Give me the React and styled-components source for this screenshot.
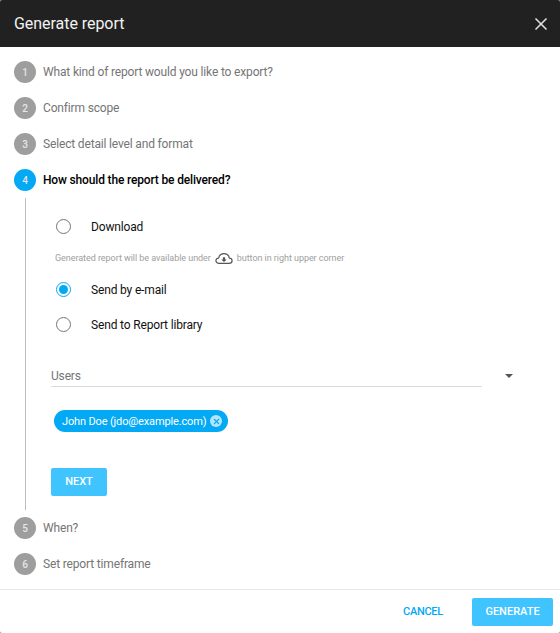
import React from 'react';
import styled, { createGlobalStyle } from 'styled-components';
import { X } from 'lucide-react';

const GlobalStyle = createGlobalStyle`
  html, body {
    margin: 0;
    padding: 0;
    background: #8c8c8c;
  }
`;

const Dialog = styled.div`
  display: flex;
  flex-direction: column;
  width: 560px;
  height: 633px;
  background: #fff;
  border-radius: 2px;
  overflow: hidden;
  font-family: Roboto, sans-serif;
`;

const Header = styled.div`
  display: flex;
  align-items: center;
  justify-content: space-between;
  flex: 0 0 47px;
  padding: 0 9px 0 14px;
  background: #212121;
  color: #f2f2f2;
`;

const Title = styled.h1`
  margin: 0;
  font-size: 16px;
  font-weight: 400;
  letter-spacing: -0.05px;
`;

const CloseButton = styled.span`
  display: flex;
  color: #e0e0e0;
`;

const Steps = styled.div`
  flex: 1;
  padding-top: 7px;
`;

const Step = styled.div`
  display: flex;
  align-items: center;
  gap: 7px;
  height: 36px;
  padding-left: 14px;
`;

const StepNumber = styled.span`
  display: flex;
  align-items: center;
  justify-content: center;
  width: 22px;
  height: 22px;
  border-radius: 50%;
  background: ${({ $active }) => ($active ? '#03a9f4' : '#9e9e9e')};
  color: #e6e6e6;
  font-size: 10px;
  font-weight: 500;
`;

const StepLabel = styled.span`
  font-size: 12px;
  letter-spacing: -0.16px;
  font-weight: ${({ $active }) => ($active ? 500 : 400)};
  color: ${({ $active }) => ($active ? '#000' : '#757575')};
`;

const StepContent = styled.div`
  display: flex;
  flex-direction: column;
  height: 312px;
  box-sizing: border-box;
  margin-left: 25px;
  padding-top: 17px;
  border-left: 1px solid #bdbdbd;
`;

const RadioRow = styled.label`
  display: flex;
  align-items: center;
  gap: 20px;
  height: 22px;
  margin: ${({ $mt }) => $mt || 0}px 0 0 30px;
  font-size: 12px;
  letter-spacing: -0.16px;
  color: #111;
`;

const RadioText = styled.span`
  margin-top: 2px;
`;

const RadioCircle = styled.span`
  display: flex;
  align-items: center;
  justify-content: center;
  box-sizing: border-box;
  width: 15px;
  height: 15px;
  border-radius: 50%;
  border: 1px solid ${({ $checked }) => ($checked ? '#03a9f4' : '#757575')};
  &::after {
    content: '';
    display: ${({ $checked }) => ($checked ? 'block' : 'none')};
    width: 9px;
    height: 9px;
    border-radius: 50%;
    background: #03a9f4;
  }
`;

const Note = styled.div`
  display: flex;
  align-items: center;
  gap: 4px;
  height: 20px;
  margin: 11px 0 0 29px;
  font-size: 9px;
  letter-spacing: -0.05px;
  color: #9e9e9e;
`;

const SelectField = styled.div`
  display: flex;
  align-items: center;
  height: 16px;
  width: 431px;
  margin: 33px 0 0 25px;
  padding-bottom: 2px;
  border-bottom: 1px solid #dcdcdc;
  font-size: 12px;
  letter-spacing: -0.16px;
  color: #757575;
  position: relative;
`;

const SelectArrow = styled.span`
  position: absolute;
  left: 454px;
  top: 6px;
  width: 0;
  height: 0;
  border-left: 4px solid transparent;
  border-right: 4px solid transparent;
  border-top: 4px solid #555;
`;

const Chip = styled.div`
  display: flex;
  align-items: center;
  align-self: flex-start;
  gap: 4px;
  height: 22px;
  margin: 23px 0 0 28px;
  padding: 0 6px 0 8px;
  border-radius: 11px;
  background: #03a9f4;
  color: #fff;
  font-size: 11px;
  letter-spacing: -0.14px;
`;

const ChipRemove = styled.span`
  display: flex;
  align-items: center;
  justify-content: center;
  width: 12px;
  height: 12px;
  border-radius: 50%;
  background: #b3e5fc;
  color: #03a9f4;
`;

const Button = styled.button`
  height: 28px;
  width: ${({ $width }) => $width}px;
  padding: 0;
  border: 0;
  border-radius: 2px;
  background: #40c4ff;
  color: #fff;
  font-family: Roboto, sans-serif;
  font-size: 11px;
  font-weight: 500;
`;

const NextButton = styled(Button)`
  align-self: flex-start;
  margin: 36px 0 0 25px;
  padding-bottom: 2px;
`;

const Footer = styled.div`
  display: flex;
  align-items: center;
  justify-content: flex-end;
  flex: 0 0 44px;
  box-sizing: border-box;
  padding: 0 7px 0 0;
  border-top: 1px solid #e8e8e8;
`;

const CancelButton = styled(Button)`
  margin-right: 13px;
  background: transparent;
  color: #03a9f4;
  letter-spacing: -0.3px;
`;

const CloudDownload = () => (
  <svg width="18" height="13" viewBox="0 0 20 14" fill="none">
    <path
      d="M5 12.5H4.5C2.5 12.5 1 11.2 1 9.5C1 7.8 2.3 6.6 4 6.5C4.7 3.5 7 1.5 10 1.5C13 1.5 15.3 3.5 16 6.5C17.7 6.6 19 7.8 19 9.5C19 11.2 17.5 12.5 15.5 12.5H5Z"
      stroke="#555"
      strokeWidth="1.3"
    />
    <path d="M8.8 5.5H11.2V8H13L10 11L7 8H8.8V5.5Z" fill="#555" />
  </svg>
);

const topSteps = ['What kind of report would you like to export?', 'Confirm scope', 'Select detail level and format'];
const bottomSteps = [
  { n: 5, label: 'When?' },
  { n: 6, label: 'Set report timeframe' },
];

const App = () => {
  return (
    <Dialog>
      <GlobalStyle />
      <Header>
        <Title>Generate report</Title>
        <CloseButton>
          <X size={20} strokeWidth={2} />
        </CloseButton>
      </Header>
      <Steps>
        {topSteps.map((label, i) => (
          <Step key={label}>
            <StepNumber>{i + 1}</StepNumber>
            <StepLabel>{label}</StepLabel>
          </Step>
        ))}
        <Step>
          <StepNumber $active>4</StepNumber>
          <StepLabel $active>How should the report be delivered?</StepLabel>
        </Step>
        <StepContent>
          <RadioRow>
            <RadioCircle />
            <RadioText>Download</RadioText>
          </RadioRow>
          <Note>
            Generated report will be available under
            <CloudDownload />
            button in right upper corner
          </Note>
          <RadioRow $mt={10}>
            <RadioCircle $checked />
            <RadioText>Send by e-mail</RadioText>
          </RadioRow>
          <RadioRow $mt={13}>
            <RadioCircle />
            <RadioText>Send to Report library</RadioText>
          </RadioRow>
          <SelectField>
            Users
            <SelectArrow />
          </SelectField>
          <Chip>
            John Doe (jdo@example.com)
            <ChipRemove>
              <X size={9} strokeWidth={3} />
            </ChipRemove>
          </Chip>
          <NextButton $width={56}>NEXT</NextButton>
        </StepContent>
        {bottomSteps.map(({ n, label }) => (
          <Step key={n}>
            <StepNumber>{n}</StepNumber>
            <StepLabel>{label}</StepLabel>
          </Step>
        ))}
      </Steps>
      <Footer>
        <CancelButton $width={72}>CANCEL</CancelButton>
        <Button $width={81}>GENERATE</Button>
      </Footer>
    </Dialog>
  );
};

export default App;
